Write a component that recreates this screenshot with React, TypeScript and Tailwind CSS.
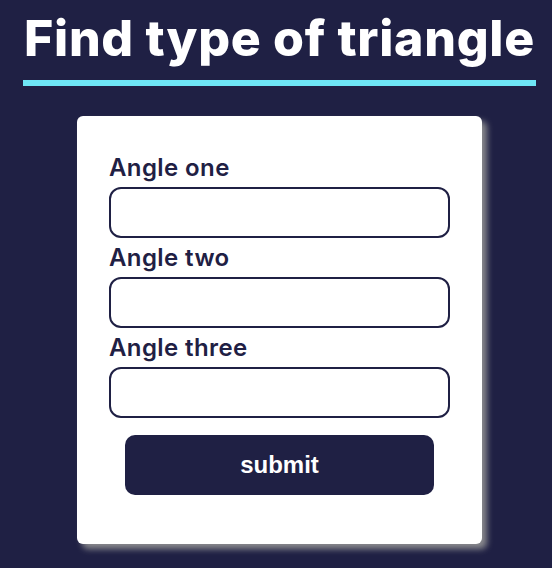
import React from "react";

const fields = ["Angle one", "Angle two", "Angle three"];

const App: React.FC = () => {
  return (
    <div className="min-h-[568px] w-full bg-[#1f2044] pl-[7px] flex flex-col items-center font-['Inter',sans-serif]">
      {/* Heading */}
      <h1 className="mt-[6px] px-[1px] pb-[10px] border-b-[6px] border-[#6ee6f6] text-white font-extrabold text-[50px] leading-[64px] tracking-[0.7px]">
        Find type of triangle
      </h1>

      {/* Form card */}
      <form
        className="mt-[30px] w-[405px] bg-white rounded-[6px] px-[32px] pt-[32px] pb-[49px] shadow-[5px_5px_6px_rgba(150,150,150,0.9)] flex flex-col"
        onSubmit={(e) => e.preventDefault()}
      >
        {fields.map((f) => (
          <div key={f} className="flex flex-col">
            <label className="h-[39px] text-[24px] leading-[39px] font-semibold tracking-[0.4px] text-[#1f2044]">{f}</label>
            <input
              type="text"
              className="h-[51px] w-full rounded-[12px] border-2 border-[#1f2044] bg-white px-3 outline-none"
            />
          </div>
        ))}
        <button
          type="submit"
          className="mt-[17px] mx-auto w-[309px] h-[60px] rounded-[10px] bg-[#1f2044] text-white text-[24px] font-bold font-['Liberation_Sans',Arial,sans-serif]"
        >
          submit
        </button>
      </form>
    </div>
  );
};

export default App;
